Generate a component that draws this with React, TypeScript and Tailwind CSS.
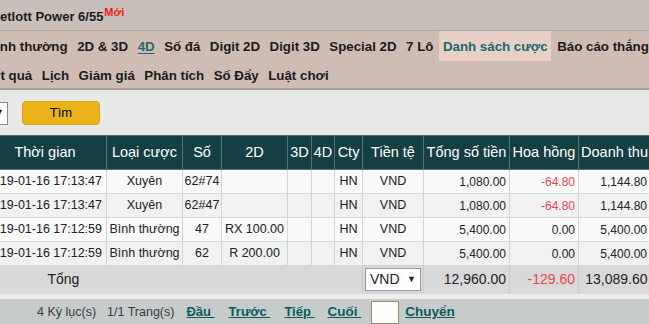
const navTop = [
  { label: 'Bình thường' },
  { label: '2D & 3D' },
  { label: '4D', link: true },
  { label: 'Số đá' },
  { label: 'Digit 2D' },
  { label: 'Digit 3D' },
  { label: 'Special 2D' },
  { label: '7 Lô' },
  { label: 'Danh sách cược', active: true },
  { label: 'Báo cáo thắng thua' },
]

const navBottom = ['Kết quả', 'Lịch', 'Giảm giá', 'Phân tích', 'Số Đẩy', 'Luật chơi']

const rows = [
  { time: '2019-01-16 17:13:47', type: 'Xuyên', so: '62#74', d2: '', total: '1,080.00', hh: '-64.80', dt: '1,144.80' },
  { time: '2019-01-16 17:13:47', type: 'Xuyên', so: '62#47', d2: '', total: '1,080.00', hh: '-64.80', dt: '1,144.80' },
  { time: '2019-01-16 17:12:59', type: 'Bình thường', so: '47', d2: 'RX 100.00', total: '5,400.00', hh: '0.00', dt: '5,400.00' },
  { time: '2019-01-16 17:12:59', type: 'Bình thường', so: '62', d2: 'R 200.00', total: '5,400.00', hh: '0.00', dt: '5,400.00' },
]

const headers = ['Thời gian', 'Loại cược', 'Số', '2D', '3D', '4D', 'Cty', 'Tiền tệ', 'Tổng số tiền', 'Hoa hồng', 'Doanh thu']

export default function App() {
  return (
    <div className="w-[649px] h-[324px] overflow-hidden bg-[#c6cccc] font-['Liberation_Sans',Arial,sans-serif] text-[#1b1b1b]">
      {/* title */}
      <div className="h-[31px] bg-[#c8bfba] border-b border-[#b3a59c] flex items-center pt-[3px]">
        <div className="-ml-[12px] text-[13px] font-bold whitespace-nowrap">
          Vietlott Power 6/55
          <sup className="text-[11px] text-[#ee1c1c] font-bold -top-[5px] ml-[1px]">Mới</sup>
        </div>
      </div>

      {/* nav */}
      <div className="bg-[#cfbdb4] border-b-2 border-[#ab9b91] -ml-[17px]">
        <div className="h-[30px] flex items-stretch gap-[2.5px] text-[13.3px] font-bold whitespace-nowrap">
          {navTop.map((n) => (
            <div
              key={n.label}
              className={
                n.active
                  ? 'px-[3.5px] pt-[2px] flex items-center bg-[#e9d0c6] text-[#17696b]'
                  : n.link
                    ? 'px-[3.5px] pt-[2px] flex items-center text-[#1f6d70] underline underline-offset-2'
                    : 'px-[3.5px] pt-[2px] flex items-center'
              }
            >
              {n.label}
            </div>
          ))}
        </div>
        <div className="h-[27px] flex items-center pt-[2px] gap-[2.5px] text-[13.3px] font-bold whitespace-nowrap -ml-[3px]">
          {navBottom.map((n) => (
            <div key={n} className="px-[3.5px]">
              {n}
            </div>
          ))}
        </div>
      </div>

      {/* filter */}
      <div className="h-[45px] bg-[#e9e9e9] flex items-center pt-[1px]">
        <div className="w-[60px] -ml-[52px] h-[23px] bg-white border border-[#8a8a8a] flex items-center justify-end pr-[3px] text-[9px]">
          ▼
        </div>
        <button className="ml-[14px] w-[78px] h-[24px] rounded-[4px] bg-[#eab318] border border-[#d9a614] text-[13px] text-black">
          Tìm
        </button>
      </div>

      {/* table */}
      <table className="table-fixed border-collapse -ml-[17px] w-[667px]">
        <colgroup>
          <col className="w-[123px]" />
          <col className="w-[76px]" />
          <col className="w-[39px]" />
          <col className="w-[66px]" />
          <col className="w-[24px]" />
          <col className="w-[23px]" />
          <col className="w-[28px]" />
          <col className="w-[61px]" />
          <col className="w-[86px]" />
          <col className="w-[69px]" />
          <col className="w-[72px]" />
        </colgroup>
        <thead>
          <tr className="h-[34px] bg-[#163f44]">
            {headers.map((h) => (
              <th key={h} className="border border-[#4d7377] text-white font-normal text-[14.5px] whitespace-nowrap px-0 overflow-hidden">
                {h}
              </th>
            ))}
          </tr>
        </thead>
        <tbody className="text-[12.5px] text-[#222]">
          {rows.map((r, i) => (
            <tr key={i} className={i % 2 === 0 ? 'h-[24px] bg-[#f9f9f9]' : 'h-[24px] bg-[#f1f1f1]'}>
              <td className="border border-[#d0d5d5] text-right pr-[4px] whitespace-nowrap overflow-hidden">{r.time}</td>
              <td className="border border-[#d0d5d5] text-center whitespace-nowrap">{r.type}</td>
              <td className="border border-[#d0d5d5] text-center">{r.so}</td>
              <td className="border border-[#d0d5d5] text-center whitespace-nowrap">{r.d2}</td>
              <td className="border border-[#d0d5d5]"></td>
              <td className="border border-[#d0d5d5]"></td>
              <td className="border border-[#d0d5d5] text-center">HN</td>
              <td className="border border-[#d0d5d5] text-center">VND</td>
              <td className="border border-[#d0d5d5] text-right pr-[3px] text-[12px]">{r.total}</td>
              <td className={r.hh.startsWith('-') ? 'border border-[#d0d5d5] text-right pr-[3px] text-[12px] text-[#f0444c]' : 'border border-[#d0d5d5] text-right pr-[3px] text-[12px]'}>
                {r.hh}
              </td>
              <td className="border border-[#d0d5d5] text-right pr-[3px] text-[12px]">{r.dt}</td>
            </tr>
          ))}
          <tr className="h-[28px] bg-[#d9d9d9] text-[14px]">
            <td colSpan={7} className="text-left pl-[64px]">Tổng</td>
            <td className="border-x border-[#cbcbcb] px-[2px]">
              <div className="h-[23px] bg-white border border-[#9a9a9a] flex items-center justify-between px-[4px] text-[14px]">
                <span>VND</span>
                <span className="text-[9px]">▼</span>
              </div>
            </td>
            <td className="border-x border-[#cbcbcb] text-right pr-[3px]">12,960.00</td>
            <td className="border-x border-[#cbcbcb] text-right pr-[3px] text-[#f0444c]">-129.60</td>
            <td className="text-right pr-[3px]">13,089.60</td>
          </tr>
        </tbody>
      </table>

      <div className="h-[5px] bg-[#ececec]" />

      {/* pager */}
      <div className="h-[27px] flex items-center pl-[37px] text-[12.5px] text-[#3a3a3a] whitespace-nowrap">
        <span>4 Kỳ lục(s)</span>
        <span className="ml-[11px]">1/1 Trang(s)</span>
        <a className="ml-[12px] font-bold text-[13px] text-[#0d5b5b] underline">Đầu&nbsp;</a>
        <a className="ml-[14px] font-bold text-[13px] text-[#0d5b5b] underline">Trước&nbsp;</a>
        <a className="ml-[14px] font-bold text-[13px] text-[#0d5b5b] underline">Tiếp&nbsp;</a>
        <a className="ml-[13px] font-bold text-[13.5px] text-[#0d5b5b] underline">Cuối&nbsp;</a>
        <input className="ml-[10px] w-[28px] h-[23px] bg-white border border-[#a98466]" />
        <a className="ml-[6px] font-bold text-[13.5px] text-[#0d5b5b] underline">Chuyển</a>
      </div>
    </div>
  )
}
